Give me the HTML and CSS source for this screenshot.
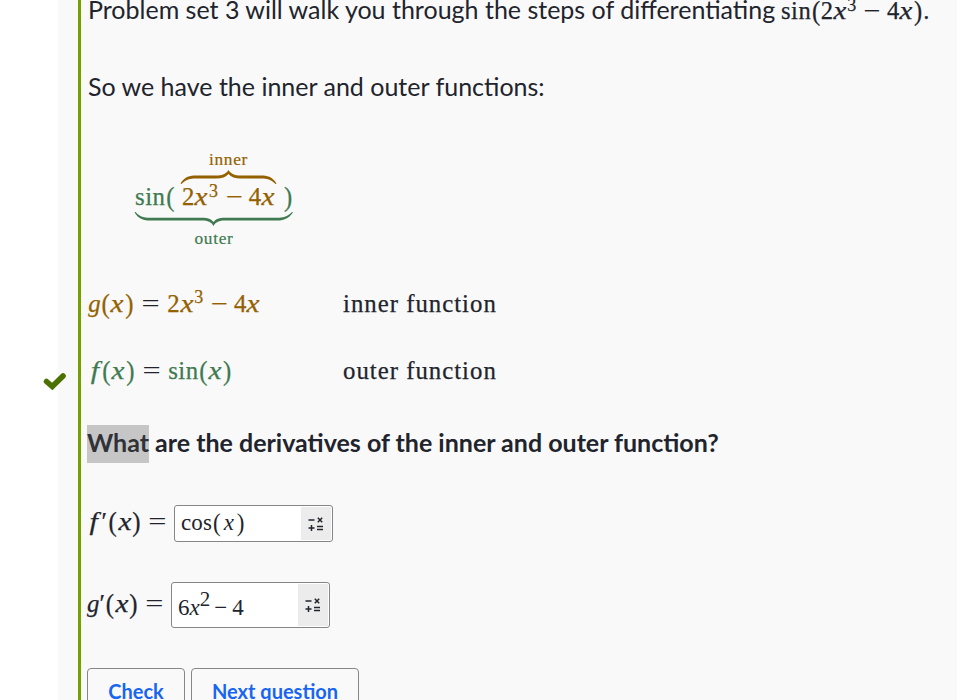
FILE: index.html
```
<!DOCTYPE html>
<html lang="en">
<head>
<meta charset="utf-8">
<title>Problem set 3</title>
<link rel="stylesheet" href="styles.css">
</head>
<body>
<main class="exercise">
  <svg class="tick" width="24" height="20" viewBox="0 0 24 20"><path d="M3.500 9.500 L9.300 14.500 L20 4" fill="none" stroke="#4b7100" stroke-width="5.6" stroke-linecap="round"/></svg>
  <section class="content">
    <p class="row intro"><span class="t1">Problem set 3 will walk you through the steps of differentiating</span><span class="math small"><span class="op">sin</span><span class="p">(</span><span class="n">2</span><span class="v">x</span><sup>3</sup><span class="bin">−</span><span class="n">4</span><span class="v">x</span><span class="p">)</span><span class="dot">.</span></span></p>
    <p class="row lead"><span class="t2">So we have the inner and outer functions:</span></p>

    <div class="braces">
      <div class="label inner-label brown">inner</div>
      <svg class="over" width="97" height="15" viewBox="0 0 97 15"><path d="M.5 13.4C5 6.5 10 5.6 16 5.6H36C42 5.6 46 4 48.500 0C51 4 55 5.600 61 5.600H81C87 5.600 92 6.500 96.500 13.400L95.500 14C91 9.500 87 8.500 81 8.500H61C55 8.500 51 7 48.500 4C46 7 42 8.500 36 8.500H16C10 8.500 6 9.500 1.500 14Z" fill="#946100"/></svg>
      <div class="math expr green"><span class="op">sin</span><span class="p">(</span><span class="brown group"><span class="n">2</span><span class="v">x</span><sup>3</sup><span class="bin">−</span><span class="n">4</span><span class="v">x</span></span><span class="p">)</span></div>
      <svg class="under" width="160" height="15" viewBox="0 0 160 15"><path d="M.5 .6C5 7.500 10 8.600 16 8.600H68C74 8.600 77 10 79.500 14C82 10 85 8.600 91 8.600H143C149 8.600 154 7.500 159 .6L158 0C153 5 149 5.700 143 5.700H91C85 5.700 82 7 79.500 10C77 7 74 5.700 68 5.700H16C10 5.700 6 5 1.500 0Z" fill="#3f7a50"/></svg>
      <div class="label outer-label green">outer</div>
    </div>

    <div class="defs">
      <div class="math"><span class="brown"><span class="g">g</span><span class="p">(</span><span class="v">x</span><span class="p">)</span></span><span class="rel">=</span><span class="brown"><span class="n">2</span><span class="v">x</span><sup>3</sup><span class="bin">−</span><span class="n">4</span><span class="v">x</span></span></div>
      <div class="desc d1">inner function</div>
      <div class="math"><span class="green"><span class="f">f</span><span class="p">(</span><span class="v">x</span><span class="p">)</span></span><span class="rel">=</span><span class="green"><span class="op">sin</span><span class="p">(</span><span class="v">x</span><span class="p">)</span></span></div>
      <div class="desc d2">outer function</div>
    </div>

    <h2 class="question"><span class="sel">What</span> are the derivatives of the inner and outer function?</h2>

    <div class="answer a1">
      <div class="math"><span class="f">f</span><span class="prime">′</span><span class="p">(</span><span class="v">x</span><span class="p">)</span><span class="rel">=</span></div>
      <div class="field"><div class="entry"><span class="cos">cos</span><span class="ep">(</span><span class="ev">x</span><span class="ep">)</span></div><div class="keys"><svg width="16" height="14" viewBox="0 0 16 14"><path d="M.5 3H6.500M9.800 .800L14.200 5.200M14.200 .800L9.800 5.200M.5 11H6.500M3.500 8V14M9 9.500H15M9 12.500H15" fill="none" stroke="#21242c" stroke-width="1.5"/></svg></div></div>
    </div>
    <div class="answer a2">
      <div class="math"><span class="g">g</span><span class="prime">′</span><span class="p">(</span><span class="v">x</span><span class="p">)</span><span class="rel">=</span></div>
      <div class="field"><div class="entry"><span>6</span><span class="ev">x</span><sup>2</sup><span class="em">−</span><span>4</span></div><div class="keys"><svg width="16" height="14" viewBox="0 0 16 14"><path d="M.5 3H6.500M9.800 .800L14.200 5.200M14.200 .800L9.800 5.200M.5 11H6.500M3.500 8V14M9 9.500H15M9 12.500H15" fill="none" stroke="#21242c" stroke-width="1.5"/></svg></div></div>
    </div>

    <div class="buttons"><button class="check">Check</button><button class="next">Next question</button></div>
  </section>
</main>
</body>
</html>
```
FILE: styles.css
```
* { box-sizing: border-box; }
html, body { height: 100%; }
body { margin: 0; background: #fff; color: #21242c; font-family: Lato, sans-serif; overflow: hidden; }
p, h2 { margin: 0; }
.exercise { position: relative; margin-left: 58px; height: 700px; padding-left: 20px; background: #f9f9f9; }
.tick { position: absolute; left: -15px; top: 372px; }
.content { height: 700px; border-left: 3px solid #74a000; padding-left: 6px; overflow: hidden; display: flex; flex-direction: column; }
.content > * { flex: none; }
.row { font-size: 25px; white-space: nowrap; padding-left: 1px; }
.intro { display: flex; align-items: baseline; height: 67px; margin-top: -11px; line-height: 40px; }
.t1 { width: 693px; }
.lead { height: 86px; line-height: 60px; }

.math { display: flex; align-items: baseline; font-family: "Liberation Serif", serif; font-size: 24.8px; line-height: 40px; white-space: nowrap; -webkit-text-stroke: .25px currentColor; }
.math.small { font-size: 24.6px; }
.math span { display: inline-block; text-align: center; }
.math .op { width: 1.228em; letter-spacing: .02em; text-align: left; }
.math .p { width: .389em; transform: scale(1, 1.1); }
.math .n { width: .5em; }
.math .v { width: .572em; font-style: italic; transform: scaleX(1.18); }
.math .g { width: .513em; font-style: italic; }
.math .f { width: .55em; font-style: italic; transform: scaleX(1.2); }
.math .bin { width: 1.222em; transform: scaleX(1.2); }
.math .rel { width: 1.334em; transform: scaleX(1.3); color: #21242c; -webkit-text-stroke: 0; }
.math .dot { width: .278em; }
.math .prime { width: .3em; }
.math sup { width: .55em; font-size: 18px; line-height: 1; position: relative; top: -8px; vertical-align: baseline; display: inline-block; }
.brown { color: #946100; }
.green { color: #3f7a50; }

.braces { width: 160px; height: 110px; margin-left: 47px; display: flex; flex-direction: column; }
.label { font: 17.3px/20px "Liberation Serif", serif; letter-spacing: .7px; text-align: center; height: 20px; -webkit-text-stroke: .2px currentColor; }
.inner-label { margin-left: 46px; width: 97px; margin-top: 8px; }
.over { display: block; margin-left: 46px; }
.expr { height: 26px; line-height: 23px; padding-left: 1px; }
.expr .group { margin: 0 8px 0 7px; }
.under { display: block; margin-top: 1px; }
.outer-label { margin-top: 2px; }

.defs { display: grid; grid-template-columns: 255px 1fr; grid-auto-rows: 67px; margin: 31px 0 0 1px; height: 134px; }
.defs .math, .desc { line-height: 41px; height: 40px; }
.defs sup { top: -9px; }
.desc { font-family: "Liberation Serif", serif; font-size: 24.8px; letter-spacing: 1px; -webkit-text-stroke: .25px currentColor; }

.question { font-size: 25px; font-weight: 700; line-height: 34px; margin-top: 8px; height: 38px; white-space: nowrap; padding-left: 0; }
.sel { display: inline-block; background: #c6c6c6; height: 38px; color: #303238; }

.answer { display: flex; align-items: center; }
.a1 { margin-top: 42px; height: 37px; }
.a2 { margin-top: 40px; height: 46px; }
.a1 .math { width: 87px; margin-top: -3px; }
.a2 .math { width: 84px; margin-top: -3px; }
.a2 .prime { width: .22em; }
.math + .field { flex: none; }
.field { width: 159px; height: 100%; border: 1px solid #85868a; border-radius: 3px; background: #fff; display: flex; padding: 1px; }
.entry { flex: 1; padding-left: 5px; display: flex; align-items: baseline; font-family: "Liberation Serif", serif; font-size: 23px; line-height: 31px; }
.cos { letter-spacing: .1px; margin-right: 1px; }
.ep { transform: scaleY(1.1); }
.ev { font-style: italic; }
.a1 .ev { margin: 0 3px; }
.a2 .entry { line-height: 48px; }
.entry sup { font-size: 21px; line-height: 1; position: relative; top: -9px; vertical-align: baseline; }
.em { margin: 0 5px 0 4px; }
.keys { width: 30px; background: #ececec; display: flex; align-items: center; justify-content: center; }

.buttons { display: flex; gap: 6px; margin-top: 40px; }
button { height: 46px; border: 1px solid #85868a; border-radius: 4px; background: transparent; color: #1865f2; font: 700 20px/44px Lato, sans-serif; padding: 0; white-space: nowrap; }
.check { width: 98px; }
.next { width: 168px; }
```
